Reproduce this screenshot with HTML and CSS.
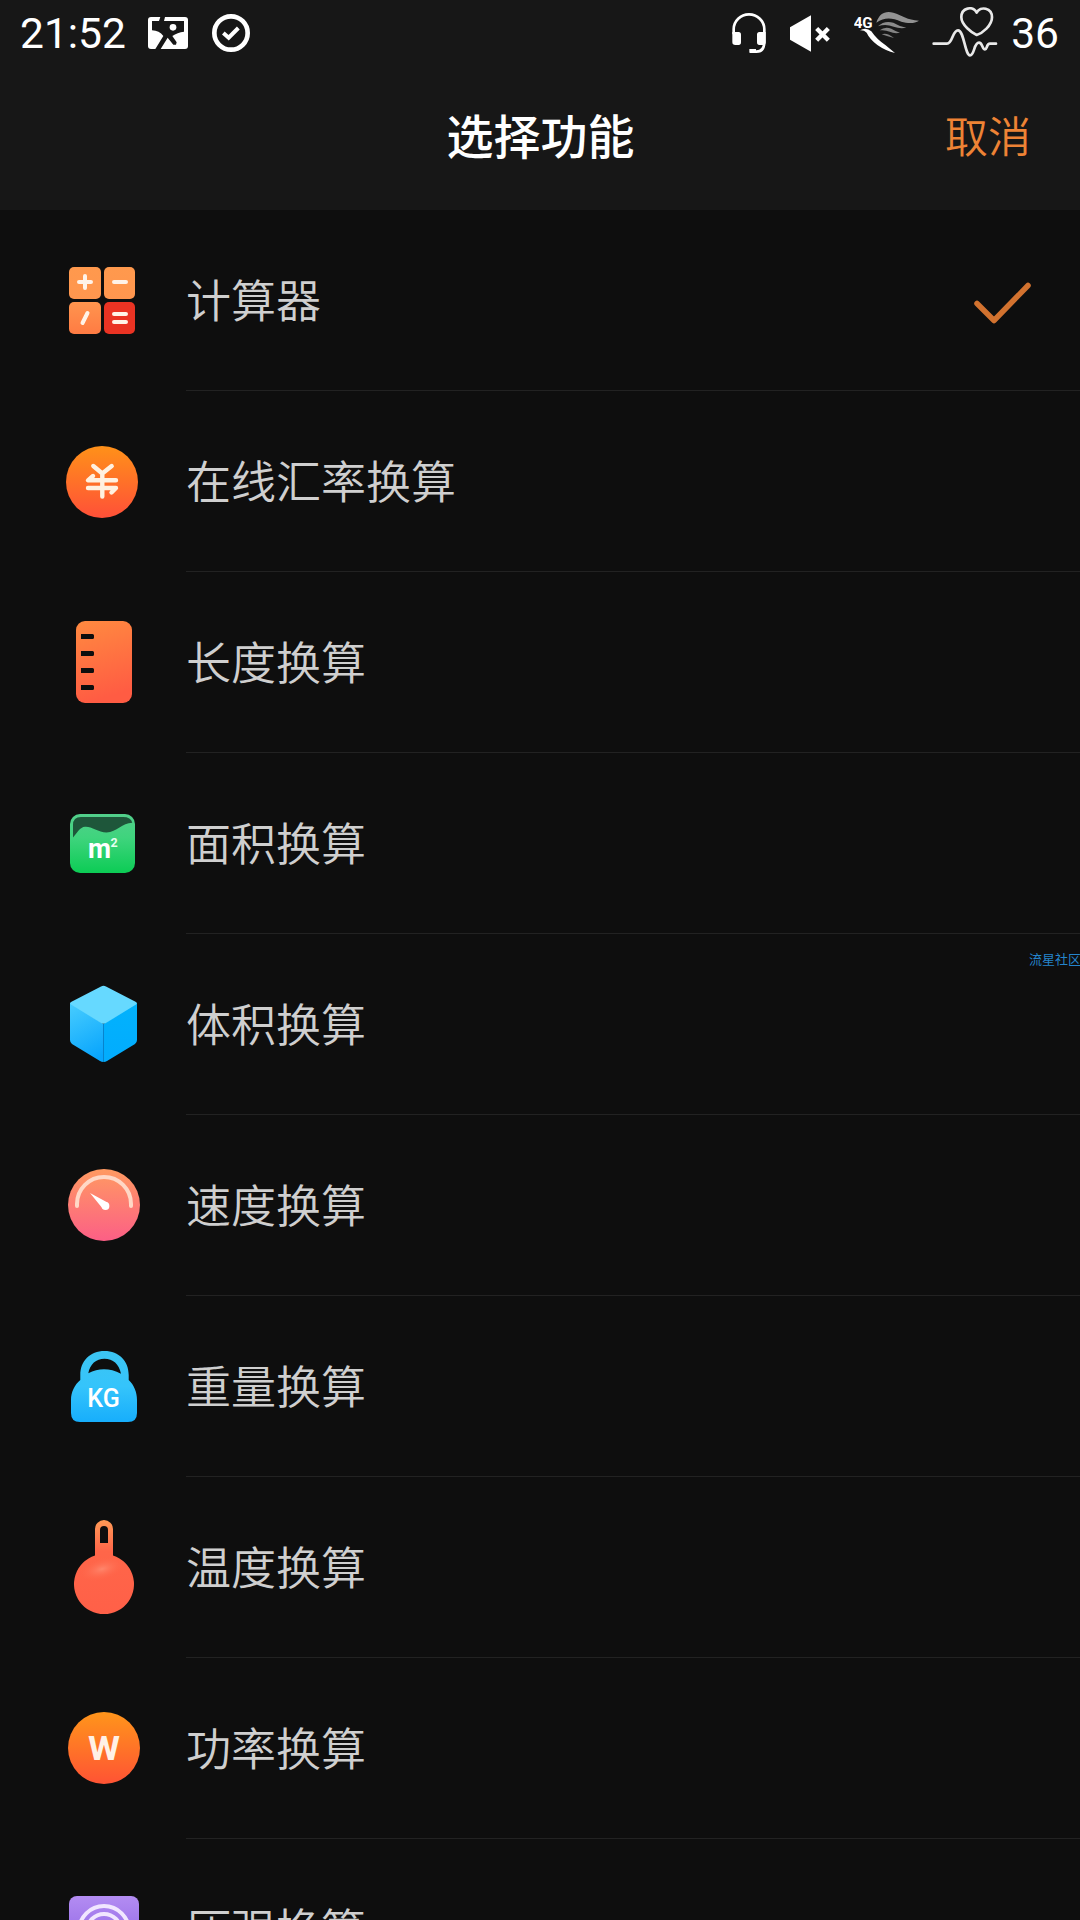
FILE: index.html
```html
<!DOCTYPE html>
<html lang="zh-CN">
<head>
  <meta charset="UTF-8" />
  <meta name="viewport" content="width=device-width, initial-scale=1" />
  <title>选择功能</title>
  <link rel="stylesheet" href="styles.css">
</head>
<body>
  <header class="header">
    <div class="status-bar">
      <div class="status-left">
        <span class="status-text">21:52</span>
        <svg class="ic-photo" viewBox="0 0 120 96">
          <rect width="120" height="96" rx="9" fill="#fff"/>
          <path d="M37 0H51L48 12H108V44Q88 46 73 57L86 76L84 83H76L59 62L38 96H22L46 57Q34 41 12 40V12H33Z" fill="#171717"/>
          <circle cx="75" cy="31" r="10" fill="#fff"/>
        </svg>
        <svg class="ic-done" viewBox="0 0 114 114" fill="none" stroke="#fff">
          <circle cx="57" cy="57" r="50" stroke-width="14"/>
          <path d="M34 57L50 71L79 42" stroke-width="12"/>
        </svg>
      </div>
      <div class="status-right">
        <svg class="ic-headset" viewBox="0 0 102 120" fill="none" stroke="#fff">
          <path d="M5 64V49A46 45 0 0 1 97 49V88Q96 116 73 116H54" stroke-width="8"/>
          <path d="M1 57H20Q27 57 27 65V88Q27 96 20 96H10Q1 96 1 88ZM101 57H82Q75 57 75 65V88Q75 96 82 96H92Q101 96 101 88ZM52 108H72V119H52Z" fill="#fff" stroke="none"/>
        </svg>
        <svg class="ic-mute" viewBox="0 0 120 110">
          <path d="M0 36L63 0V110L0 74Z" fill="#fff"/>
          <path d="M80 40L115 75M115 40L80 75" stroke="#fff" stroke-width="13"/>
        </svg>
        <svg class="ic-signal" viewBox="0 0 195 126">
          <text x="-1" y="48" class="net" textLength="57" lengthAdjust="spacingAndGlyphs">4G</text>
          <path d="M18 55Q36 44 52 58Q68 82 94 99L123 123Q96 117 70 99Q46 80 38 62Q30 54 18 55Z" fill="#fff"/>
          <path d="M67 32C76 5 92 -4 118 2C144 10 160 24 195 26C181 36 160 34 142 29C112 16 92 15 67 32Z" fill="#939393"/>
          <path d="M72 43Q91 24 118 32Q138 44 157 47Q138 51 119 44Q94 34 72 43Z" fill="#8b8b8b"/>
          <path d="M77 55Q92 43 112 50Q125 58 138 62Q122 66 107 59Q94 53 77 55Z" fill="#848484"/>
          <path d="M83 67Q98 60 120 78Q102 74 83 67Z" fill="#808080"/>
        </svg>
        <svg class="ic-heart" viewBox="0 0 196 150" fill="none" stroke="#e9e9e9" stroke-width="8" stroke-linecap="round" stroke-linejoin="round">
          <path d="M4 110H44C61 110 60 70 77 70C95 70 98 145 113 145C127 145 124 107 140 107C151 107 149 127 158 127C165 127 162 110 173 110H191"/>
          <path d="M133 84C119 78 87 54 87 31C87 2 121 -5 133 17C144 -4 179 2 179 31C179 56 150 79 133 84Z"/>
        </svg>
        <span class="status-text">36</span>
      </div>
    </div>
    <div class="title-bar">
      <h1 class="title">选择功能</h1>
      <a class="cancel">取消</a>
    </div>
  </header>

  <ul class="list">
    <li class="row">
      <svg class="icon" viewBox="0 0 92 100">
        <defs>
          <linearGradient id="gCalc" gradientUnits="userSpaceOnUse" x1="0" y1="17" x2="0" y2="84"><stop offset="0" stop-color="#ff994d"/><stop offset=".5" stop-color="#ff964f"/><stop offset="1" stop-color="#ff7b43"/></linearGradient>
        </defs>
        <rect x="13" y="17" width="32" height="32" rx="5" fill="url(#gCalc)"/>
        <rect x="48" y="17" width="31" height="32" rx="5" fill="url(#gCalc)"/>
        <rect x="13" y="52" width="32" height="32" rx="5" fill="url(#gCalc)"/>
        <rect x="48" y="52" width="31" height="32" rx="5" fill="#ea3323"/>
        <path d="M23 32H35M29 26V38M58 32H70M26.500 73L31.500 63M58 64H70M58 72H70" stroke="#fff3e8" stroke-width="4" stroke-linecap="round"/>
      </svg>
      <div class="cell"><span>计算器</span>
        <svg class="check" viewBox="0 0 58 42"><path d="M3 21.500L20 38.500L54 3.500" fill="none" stroke="#d2722f" stroke-width="5.500" stroke-linecap="round" stroke-linejoin="round"/></svg>
      </div>
    </li>
    <li class="row">
      <svg class="icon" viewBox="0 0 92 100">
        <defs><linearGradient id="gRate" x2="0" y2="1"><stop offset="0" stop-color="#ff9119"/><stop offset="1" stop-color="#ff5038"/></linearGradient></defs>
        <circle cx="46" cy="51" r="36" fill="url(#gRate)"/>
        <path d="M37.300 35L46.300 42.500L55.700 35M46.300 42V65.500M37 45L32 49.300H60M32 57H60L55.500 61.500" fill="none" stroke="#fff1e0" stroke-width="4.400" stroke-linecap="round" stroke-linejoin="round"/>
      </svg>
      <div class="cell"><span>在线汇率换算</span></div>
    </li>
    <li class="row">
      <svg class="icon" viewBox="0 0 92 100">
        <defs><linearGradient id="gLen" x1="0" y1="0" x2=".2" y2="1"><stop offset="0" stop-color="#ff8a40"/><stop offset="1" stop-color="#ff5c43"/></linearGradient></defs>
        <rect x="20" y="9" width="56" height="82" rx="9" fill="url(#gLen)"/>
        <path d="M25 22H36.500Q38 22 38 23.500V25.500Q38 27 36.500 27H25ZM25 39H36.500Q38 39 38 40.500V42.500Q38 44 36.500 44H25ZM25 56H36.500Q38 56 38 57.500V59.500Q38 61 36.500 61H25ZM25 73H36.500Q38 73 38 74.500V76.500Q38 78 36.500 78H25Z" fill="#0e0e0e"/>
      </svg>
      <div class="cell"><span>长度换算</span></div>
    </li>
    <li class="row">
      <svg class="icon" viewBox="0 0 92 100">
        <defs><linearGradient id="gArea" x2="0" y2="1"><stop offset="0" stop-color="#52cf8b"/><stop offset=".4" stop-color="#3fd47d"/><stop offset="1" stop-color="#0ccc55"/></linearGradient></defs>
        <rect x="14" y="21" width="65" height="59" rx="10" fill="url(#gArea)"/>
        <path d="M17 44.500V32Q17 24 25 24H67Q75 24 76.300 29.700C66 30 61 39 50.500 39.500C42 39 35 33 29 33.700C24 34 21 40 17 44.500Z" fill="#1e563a"/>
        <text x="32" y="65" class="m" textLength="23" lengthAdjust="spacingAndGlyphs">m</text>
        <text x="54.500" y="54" class="sq">2</text>
      </svg>
      <div class="cell"><span>面积换算</span></div>
    </li>
    <li class="row">
      <svg class="icon" viewBox="0 0 92 100">
        <defs>
          <linearGradient id="gCubeL" x1=".3" y1="0" x2=".6" y2="1"><stop offset="0" stop-color="#44cafe"/><stop offset="1" stop-color="#08a5fd"/></linearGradient>
          <linearGradient id="gCubeR" x2="0" y2="1"><stop offset="0" stop-color="#02b2fc"/><stop offset="1" stop-color="#02acfe"/></linearGradient>
        </defs>
        <path d="M14 28.500L47.500 50V88Q45.500 88 44 87L16 70Q14 68.500 14 66Z" fill="url(#gCubeL)"/>
        <path d="M81 28.500L47.500 50V88Q49.500 88 51 87L79 70Q81 68.500 81 66Z" fill="url(#gCubeR)"/>
        <path d="M45 12.500Q47.500 11.200 50 12.500L80 28Q81.500 29.300 80 30.500L50 49Q47.500 50.500 45 49L15 30.500Q13.500 29.300 15 28Z" fill="#66d9ff"/>
        <path d="M47.500 50V86" stroke="#0883cf" stroke-width=".8"/>
      </svg>
      <div class="cell"><span>体积换算</span></div>
    </li>
    <li class="row">
      <svg class="icon" viewBox="0 0 92 100">
        <defs><linearGradient id="gSpeed" x2="0" y2="1"><stop offset="0" stop-color="#ff9a62"/><stop offset="1" stop-color="#fc5f86"/></linearGradient></defs>
        <circle cx="48" cy="50" r="36" fill="url(#gSpeed)"/>
        <path d="M21 51V49A27 27 0 0 1 75 49V51" fill="none" stroke="#ffd8c6" stroke-width="4" stroke-linecap="round"/>
        <path d="M34 38L51.500 47.500A4.300 4.300 0 0 1 47 54Z" fill="#fff"/>
        <circle cx="49.500" cy="51" r="3.900" fill="#fff"/>
      </svg>
      <div class="cell"><span>速度换算</span></div>
    </li>
    <li class="row">
      <svg class="icon" viewBox="0 0 92 100">
        <defs><linearGradient id="gKg" x2="0" y2="1"><stop offset="0" stop-color="#3cc5f2"/><stop offset=".5" stop-color="#35c4fb"/><stop offset="1" stop-color="#17aefc"/></linearGradient></defs>
        <path fill-rule="evenodd" d="M24.300 44V39C24.300 25 34 15 48.500 15S72.700 25 72.700 39V44C78 49 81 56 81 64V77Q81 86 72 86H24Q15 86 15 77V64C15 56 18.500 49 24.300 44ZM32.300 37.300Q48 29 65 37.700C63 28 57 22.700 48.500 22.700S34 28 32.300 37.300Z" fill="url(#gKg)"/>
        <text x="31.300" y="71" class="kg" textLength="32.500" lengthAdjust="spacingAndGlyphs">KG</text>
      </svg>
      <div class="cell"><span>重量换算</span></div>
    </li>
    <li class="row">
      <svg class="icon" viewBox="0 0 92 100">
        <defs>
          <linearGradient id="gTemp" x2="0" y2="1"><stop offset="0" stop-color="#ff9a56"/><stop offset=".33" stop-color="#ff6649"/><stop offset="1" stop-color="#ff6048"/></linearGradient>
          <radialGradient id="gShine"><stop offset="0" stop-color="#ff866c"/><stop offset="1" stop-color="#ff6649" stop-opacity="0"/></radialGradient>
        </defs>
        <path fill-rule="evenodd" d="M39 38.500V12A9 9 0 0 1 57 12V38.500A30 30 0 1 1 39 38.500ZM44 26H52V13A4 4 0 0 0 44 13Z" fill="url(#gTemp)"/>
        <ellipse cx="46" cy="52" rx="23" ry="11" transform="rotate(-15 46 52)" fill="url(#gShine)"/>
      </svg>
      <div class="cell"><span>温度换算</span></div>
    </li>
    <li class="row">
      <svg class="icon" viewBox="0 0 92 100">
        <defs><linearGradient id="gPow" x2="0" y2="1"><stop offset="0" stop-color="#ff951b"/><stop offset="1" stop-color="#ff5334"/></linearGradient></defs>
        <circle cx="48" cy="50" r="36" fill="url(#gPow)"/>
        <text x="32" y="62" class="w" textLength="32" lengthAdjust="spacingAndGlyphs">W</text>
      </svg>
      <div class="cell"><span>功率换算</span></div>
    </li>
    <li class="row">
      <svg class="icon" viewBox="0 0 92 100">
        <defs><linearGradient id="gPress" x2="0" y2="1"><stop offset="0" stop-color="#b38cf2"/><stop offset="1" stop-color="#8459e0"/></linearGradient></defs>
        <rect x="13" y="17" width="70" height="70" rx="8" fill="url(#gPress)"/>
        <circle cx="48" cy="52" r="25" fill="none" stroke="#f1e6ff" stroke-width="4"/>
        <circle cx="48" cy="52" r="17" fill="none" stroke="#f1e6ff" stroke-width="4"/>
      </svg>
      <div class="cell"><span>压强换算</span></div>
    </li>
  </ul>

  <div class="watermark">流星社区</div>
</body>
</html>
```

FILE: styles.css
```css
body {
  margin: 0; width: 1080px; height: 1920px; position: relative;
  overflow: hidden; background: #0e0e0e;
  font-family: Roboto, "Noto Sans CJK SC", sans-serif;
}

svg { display: block; flex: none; }

.header { height: 210px; background: #171717; }

.status-bar {
  height: 66px; padding: 0 21px 0 20px;
  display: flex; justify-content: space-between;
}

.status-left, .status-right { display: flex; align-items: center; }

.status-text { font-size: 42.5px; line-height: 66px; color: #fff; padding-top: 1px; }

.ic-photo { width: 40px; height: 32px; margin-left: 22px; }
.ic-done { width: 38px; height: 38px; margin-left: 24px; }
.ic-headset { width: 34px; height: 40px; }
.ic-mute { width: 40px; height: 37px; margin-left: 24px; }
.ic-signal { width: 65px; height: 42px; margin-left: 24px; }
.ic-heart { width: 66px; height: 50px; margin: 0 13px 2px 13px; }

.net { font-size: 46px; font-weight: 700; fill: #fff; }

.title-bar {
  height: 144px; display: grid; align-items: start;
  grid-template-columns: 200px 1fr 200px;
}

.title {
  grid-column: 2; margin: 37px 0 0 1px; text-align: center;
  font-size: 47px; line-height: 70px; font-weight: 500; color: #fff;
}

.cancel {
  margin-top: 38px; padding-right: 49px; text-align: right;
  font-size: 43px; line-height: 68px; font-weight: 350; color: #ee8335;
}

.list { margin: 0; padding: 0; list-style: none; }

.row { height: 181px; display: flex; align-items: center; padding-left: 56px; }

.icon { width: 92px; height: 100px; margin-bottom: 1px; }

.cell {
  flex: 1; height: 180px; margin-left: 38px; padding-right: 48px;
  display: flex; align-items: center; justify-content: space-between;
  border-bottom: 1px solid #222;
  font-size: 45px; font-weight: 350; color: #cfcfcf;
}

.cell span { padding-bottom: 4px; }

.check { width: 58px; height: 42px; margin-top: 5px; }

.m { font-size: 28px; font-weight: 700; fill: #fff; }
.sq { font-size: 12.5px; font-weight: 700; fill: #e5fff0; }
.kg { font-size: 25.5px; font-weight: 500; fill: #fff; }
.w { font-size: 33px; font-weight: 700; fill: #fff1e6; }

.watermark {
  position: absolute; left: 1029px; top: 950px;
  font-size: 13px; line-height: 20px; white-space: nowrap; color: #2585cc;
}
```
